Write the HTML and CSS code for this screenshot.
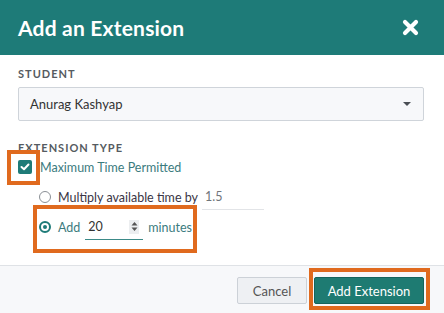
FILE: index.html
```html
<!DOCTYPE html>
<html lang="en">
<head>
  <meta charset="UTF-8" />
  <meta name="viewport" content="width=device-width, initial-scale=1" />
  <title>Add an Extension</title>
  <link rel="stylesheet" href="styles.css">
</head>
<body>
  <div class="modal">
    <header class="modal-head">
      <h1>Add an Extension</h1>
      <button class="cerrar" aria-label="Close">
        <svg width="17" height="17" viewBox="0 0 17 17">
          <path d="M3 3 L14 14 M14 3 L3 14" stroke="#fff" stroke-width="4.2" stroke-linecap="round" fill="none"/>
        </svg>
      </button>
    </header>

    <div class="modal-body">
      <div class="field-label">Student</div>
      <div class="select">
        <span>Anurag Kashyap</span>
        <span class="caret"></span>
      </div>

      <div class="field-label type-label">Extension Type</div>
      <div class="check-row">
        <span class="checkbox">
          <svg width="10" height="8" viewBox="0 0 10 8">
            <path d="M1.5 4 L4 6.3 L8.5 1.5" stroke="#fff" stroke-width="2" stroke-linecap="round" stroke-linejoin="round" fill="none"/>
          </svg>
          <span class="marca marca-check"></span>
        </span>
        <span class="label-on">Maximum Time Permitted</span>
      </div>

      <div class="radio-row">
        <span class="radio"></span>
        <span class="label-off">Multiply available time by</span>
        <span class="num-input muted">1.5</span>
      </div>

      <div class="radio-row">
        <span class="radio checked"></span>
        <span class="label-on">Add</span>
        <span class="num-input active">20
          <span class="spinner">
            <svg width="7" height="11" viewBox="0 0 7 11">
              <path d="M0.5 4.5 L3.5 1 L6.5 4.5 Z M0.5 6.5 L3.5 10 L6.5 6.5 Z" fill="#555"/>
            </svg>
          </span>
        </span>
        <span class="label-on">minutes</span>
        <span class="marca marca-add"></span>
      </div>
    </div>

    <footer class="modal-foot">
      <button class="btn btn-cancel">Cancel</button>
      <button class="btn btn-primary">Add Extension
        <span class="marca marca-btn"></span>
      </button>
    </footer>
  </div>
</body>
</html>
```

FILE: styles.css
```css
* {
  box-sizing: border-box;
}

body {
  margin: 0;
  font-family: Lato, "Open Sans", sans-serif;
  background: #fff;
}

.modal {
  width: 444px;
  height: 313px;
  display: flex;
  flex-direction: column;
  background: #fff;
}

.modal-head {
  height: 55px;
  flex-shrink: 0;
  background: #1e7b78;
  display: flex;
  align-items: center;
  justify-content: space-between;
  padding: 0 25px 0 18px;
}

.modal-head h1 {
  margin: 0;
  color: #fff;
  font-size: 21px;
  font-weight: 700;
  letter-spacing: 0.2px;
}

.cerrar {
  border: 0;
  background: none;
  padding: 0;
  display: flex;
}

.modal-body {
  flex: 1;
  padding: 12px 20px 0 18px;
  font-size: 12.5px;
}

.field-label {
  font-size: 11px;
  line-height: 14px;
  font-weight: 700;
  letter-spacing: 1px;
  text-transform: uppercase;
  color: #555b61;
}

.select {
  margin-top: 6px;
  height: 34px;
  border: 1px solid #cfd4da;
  border-radius: 2px;
  background: #f7f8fa;
  display: flex;
  align-items: center;
  justify-content: space-between;
  padding: 0 12px 0 11px;
  color: #333;
  font-size: 13px;
}

.caret {
  width: 0;
  height: 0;
  border-left: 4px solid transparent;
  border-right: 4px solid transparent;
  border-top: 4px solid #4a4f55;
}

.type-label {
  margin-top: 20px;
}

.check-row {
  margin-top: 4px;
  height: 16px;
  display: flex;
  align-items: center;
  gap: 8px;
}

.checkbox {
  position: relative;
  width: 14px;
  height: 14px;
  border-radius: 2px;
  background: #1e7b78;
  display: flex;
  align-items: center;
  justify-content: center;
}

.label-on {
  color: #3b7b7e;
}

.label-off {
  color: #3a3545;
}

.radio-row {
  position: relative;
  margin-left: 21px;
  height: 26px;
  display: flex;
  align-items: center;
  gap: 7px;
}

.check-row + .radio-row {
  margin-top: 9px;
}

.radio-row + .radio-row {
  margin-top: 4px;
}

.radio {
  width: 12px;
  height: 12px;
  border-radius: 50%;
  border: 1.5px solid #8a8f95;
  background: #fff;
}

.radio.checked {
  border: 2px solid #1e7b78;
  display: flex;
  align-items: center;
  justify-content: center;
}

.radio.checked::after {
  content: "";
  width: 4px;
  height: 4px;
  border-radius: 50%;
  background: #1e7b78;
}

.num-input {
  height: 26px;
  display: flex;
  align-items: center;
  justify-content: space-between;
  padding: 0 4px 0 3px;
}

.num-input.muted {
  width: 62px;
  color: #70757b;
  border-bottom: 1px solid #e2e4e7;
  margin-left: -3px;
}

.num-input.active {
  width: 58px;
  color: #333;
  border-bottom: 1px solid #3c8a88;
  margin-left: -2px;
  margin-right: -2px;
}

.spinner {
  width: 10px;
  height: 14px;
  background: #eceef0;
  display: flex;
  align-items: center;
  justify-content: center;
}

.marca {
  position: absolute;
  border: 4px solid #e06a1e;
  pointer-events: none;
}

.marca-check {
  left: -11px;
  top: -10px;
  width: 33px;
  height: 35px;
}

.marca-add {
  left: -6px;
  top: -9px;
  width: 164px;
  height: 48px;
}

.modal-foot {
  height: 48px;
  flex-shrink: 0;
  background: #f7f8fa;
  border-top: 1px solid #dfe2e6;
  display: flex;
  justify-content: flex-end;
  align-items: flex-start;
  gap: 7px;
  padding: 11px 20px 0 0;
}

.btn {
  position: relative;
  height: 27px;
  border-radius: 2px;
  font-family: Lato, "Open Sans", sans-serif;
  font-size: 13px;
  padding: 0;
}

.btn-cancel {
  width: 70px;
  background: #eef0f3;
  border: 1px solid #ccd1d7;
  color: #555;
}

.btn-primary {
  width: 110px;
  background: #1e7b72;
  border: 1px solid #15645d;
  color: #fff;
}

.marca-btn {
  left: -6px;
  top: -10px;
  width: 121px;
  height: 42px;
}
```
